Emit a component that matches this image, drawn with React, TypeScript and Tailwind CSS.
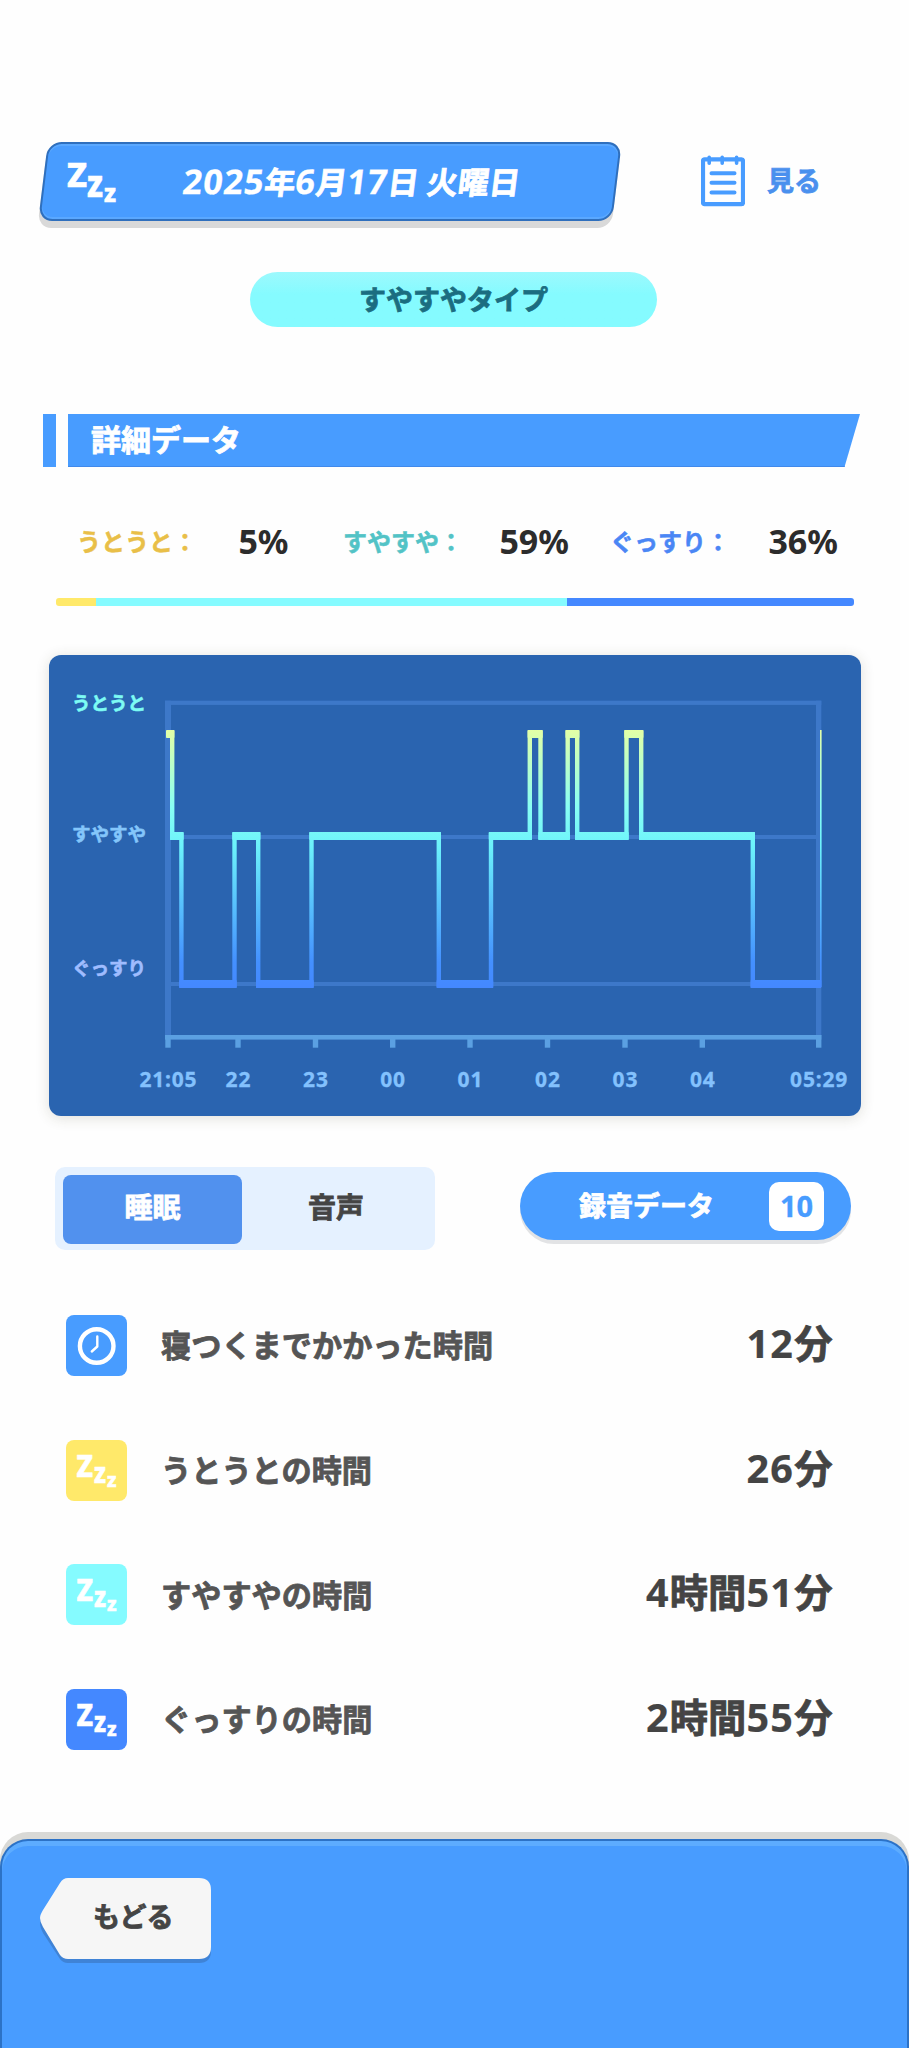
import { useState } from 'react'
import clsx from 'clsx'

interface ZLetter {
  char: string
  x: number
  y: number
  size: number
  width: number
}

const HEADER_Z: ZLetter[] = [
  { char: 'Z', x: 0, y: 25.5, size: 34, width: 20 },
  { char: 'z', x: 20, y: 36, size: 37, width: 16 },
  { char: 'z', x: 37, y: 40.5, size: 24, width: 12 },
]

const ROW_Z: ZLetter[] = [
  { char: 'Z', x: 10.5, y: 37, size: 30, width: 16.5 },
  { char: 'z', x: 28, y: 43, size: 27.5, width: 12 },
  { char: 'z', x: 41, y: 47, size: 20, width: 9.5 },
]

const RATIOS = [
  { label: 'うとうと', percent: 5, text: 'text-[#e9bf48]', bar: 'bg-[#ffe96a]', cell: 'w-[266px]', value: 'w-[61.5px]' },
  { label: 'すやすや', percent: 59, text: 'text-[#52c3c6]', bar: 'bg-[#85fbff]', cell: 'w-[267px]', value: 'w-[76px]' },
  { label: 'ぐっすり', percent: 36, text: 'text-[#4a86f5]', bar: 'bg-[#4488ff]', cell: 'w-[270px]', value: 'w-[78px]' },
]

const TICKS = [
  { x: 119, label: '21:05' },
  { x: 189, label: '22' },
  { x: 266.5, label: '23' },
  { x: 343.7, label: '00' },
  { x: 421, label: '01' },
  { x: 498.5, label: '02' },
  { x: 576, label: '03' },
  { x: 653.3, label: '04' },
  { x: 769.7, label: '05:29' },
]

// top edge of the line for each sleep level
const LEVEL_Y = { light: 75, mid: 177, deep: 325 }

const STEPS: { x: number; level: keyof typeof LEVEL_Y }[] = [
  { x: 118.5, level: 'light' },
  { x: 123.2, level: 'mid' },
  { x: 132.4, level: 'deep' },
  { x: 185.5, level: 'mid' },
  { x: 209.2, level: 'deep' },
  { x: 262.5, level: 'mid' },
  { x: 389.8, level: 'deep' },
  { x: 442, level: 'mid' },
  { x: 480.8, level: 'light' },
  { x: 491.5, level: 'mid' },
  { x: 518.7, level: 'light' },
  { x: 528.2, level: 'mid' },
  { x: 577.5, level: 'light' },
  { x: 592.2, level: 'mid' },
  { x: 703.8, level: 'deep' },
]

const ROWS = [
  { label: '寝つくまでかかった時間', value: '12分', bg: 'bg-[#489cff]', icon: 'clock' },
  { label: 'うとうとの時間', value: '26分', bg: 'bg-[#ffe96a]', icon: 'zzz' },
  { label: 'すやすやの時間', value: '4時間51分', bg: 'bg-[#85fbff]', icon: 'zzz' },
  { label: 'ぐっすりの時間', value: '2時間55分', bg: 'bg-[#4488ff]', icon: 'zzz' },
]

function Zzz({ letters, className }: { letters: ZLetter[]; className: string }) {
  return (
    <svg className={className} fill="#fff" stroke="#fff" strokeWidth="0.6" fontWeight="800">
      {letters.map((l, i) => (
        <text key={i} x={l.x} y={l.y} fontSize={l.size} textLength={l.width} lengthAdjust="spacingAndGlyphs">
          {l.char}
        </text>
      ))}
    </svg>
  )
}

function ClockIcon() {
  return (
    <svg className="h-[61px] w-[61px]" fill="none" stroke="#fff" strokeLinecap="round" strokeLinejoin="round">
      <circle cx="30.7" cy="31" r="16.8" strokeWidth="4.4" />
      <path d="M31.3 21.5V31.5L25.8 36.5" strokeWidth="2.4" />
    </svg>
  )
}

function NotepadIcon() {
  return (
    <svg className="h-[52px] w-[44px]" fill="none" stroke="#489cff" strokeLinecap="round">
      <rect x="2" y="4.4" width="40" height="44.8" rx="1.5" strokeWidth="4.2" />
      <path d="M8.2 2.2V8.2M21.2 2.2V8.2M35.6 2.2V8.2" strokeWidth="3.6" />
      <path d="M10.5 18.2H33.5M10.5 27.8H33.5M10.5 37.6H33.5" strokeWidth="4" />
    </svg>
  )
}

function SleepChart() {
  return (
    <svg className="h-[461px] w-[812px]" fontWeight="700">
      <defs>
        <linearGradient id="stage" gradientUnits="userSpaceOnUse" x1="0" y1="75" x2="0" y2="333">
          <stop offset="0" stopColor="#e3ffa6" />
          <stop offset="0.3" stopColor="#88fff4" />
          <stop offset="0.45" stopColor="#6cf2fb" />
          <stop offset="0.9" stopColor="#4490ff" />
          <stop offset="1" stopColor="#4488ff" />
        </linearGradient>
      </defs>

      {/* Grid */}
      <g fill="#3d78c9">
        <rect x="116" y="45.7" width="656.3" height="4.2" />
        <rect x="116" y="45.7" width="6" height="335" />
        <rect x="767" y="45.7" width="5.3" height="335" />
        <rect x="122" y="180" width="645" height="4" />
        <rect x="122" y="327" width="645" height="4" />
      </g>
      <rect x="116" y="380" width="656.3" height="4.6" fill="#5ba0e2" />
      {TICKS.map(t => (
        <rect key={t.label} x={t.x - 2.7} y="380" width="5.4" height="12.7" fill="#5ba0e2" />
      ))}

      {/* Stage line */}
      <g fill="url(#stage)">
        {STEPS.map((s, i) => {
          const next = STEPS[i + 1]
          const end = next ? next.x + 2.2 : 772.3
          const y = LEVEL_Y[s.level]
          const nextY = next ? LEVEL_Y[next.level] : y
          // the first step starts flush with the frame
          const start = i === 0 ? s.x - 1.5 : s.x - 2.2
          return (
            <g key={s.x}>
              <rect x={start} y={y} width={end - start} height="8" rx="0.8" />
              {next && (
                <rect x={next.x - 2.2} y={Math.min(y, nextY)} width="4.4" height={Math.abs(nextY - y) + 8} rx="0.8" />
              )}
            </g>
          )
        })}
        <rect x="771" y="75" width="1.6" height="257" />
      </g>

      {/* Labels */}
      <g fontSize="18.5" textAnchor="middle" strokeWidth="0.6">
        <text x="60" y="54.5" fill="#7dfbf4" stroke="#7dfbf4">うとうと</text>
        <text x="60" y="185.5" fill="#84c6fb" stroke="#84c6fb">すやすや</text>
        <text x="60" y="319.5" fill="#9fbcff" stroke="#9fbcff">ぐっすり</text>
      </g>
      <g fontSize="21" fill="#83c1fd" stroke="#83c1fd" strokeWidth="0.3" textAnchor="middle" letterSpacing="0.8">
        {TICKS.map(t => (
          <text key={t.label} x={t.x + 0.4} y="431.5">{t.label}</text>
        ))}
      </g>
    </svg>
  )
}

// digits are set a little larger and wider than the kanji round them
function Mixed({ text, digitClass }: { text: string; digitClass: string }) {
  return (
    <>
      {text.split(/(\d+)/).map((part, i) =>
        /\d/.test(part) ? <span key={i} className={digitClass}>{part}</span> : part,
      )}
    </>
  )
}

export default function App() {
  const [tab, setTab] = useState<'sleep' | 'voice'>('sleep')

  return (
    <div className="flex h-[2048px] w-[909px] flex-col overflow-hidden bg-[#fefefe] font-['Noto_Sans','Noto_Sans_CJK_JP',sans-serif] font-bold leading-none text-[#444] *:shrink-0 [-webkit-text-stroke:0.8px]">

      {/* Header */}
      <header className="mt-[142px] flex h-[79px] items-center">
        <div className="ml-[43px] flex h-[79px] w-[573.5px] -skew-x-[7deg] items-center rounded-[14px] border-2 border-[#2f6fbd] bg-[#489cff] shadow-[0_7px_0_#d9d9d9,inset_0_2px_0_#5aa8ff,inset_0_-2px_0_#5aa8ff]">
          <Zzz letters={HEADER_Z} className="ml-[22px] h-[42px] w-[50px] skew-x-[7deg] overflow-visible" />
          <h1 className="ml-[66px] whitespace-nowrap pb-[2px] text-[31px] text-white">
            <Mixed text="2025年6月17日 火曜日" digitClass="text-[34px] tracking-[1px] [-webkit-text-stroke:0.3px]" />
          </h1>
        </div>
        <button type="button" className="ml-[84.5px] flex items-center gap-[22px] pb-[2px] text-[27px] text-[#4a90ee]">
          <NotepadIcon />
          <span>見る</span>
        </button>
      </header>

      <div className="mt-[51px] ml-[250px] flex h-[55px] w-[407px] items-center justify-center rounded-full bg-linear-to-b from-[#9cf9fd] to-[#85fbff] to-40% pb-px text-[27px] text-[#1b6d80]">
        すやすやタイプ
      </div>

      {/* Details */}
      <div className="mt-[87px] ml-[43px] flex h-[53px] gap-3">
        <div className="w-[13px] bg-[#489cff]" />
        <h2 className="flex w-[792px] items-center border-b border-[#4189ea] bg-[#489cff] pl-[23px] text-[30px] text-white [clip-path:polygon(0_0,100%_0,calc(100%-15.5px)_100%,0_100%)]">
          詳細データ
        </h2>
      </div>

      <div className="mt-[51px] ml-[77px] flex h-[48px] items-center">
        {RATIOS.map(r => (
          <div key={r.label} className={clsx('flex items-center', r.cell)}>
            <span className={clsx('w-[150px] text-[24px] [-webkit-text-stroke:0.5px]', r.text)}>{r.label}：</span>
            <span className={clsx('pb-[3px] text-right text-[34px] text-[#2c2c2c] [-webkit-text-stroke:0]', r.value)}>{r.percent}%</span>
          </div>
        ))}
      </div>
      <div className="mt-[32px] ml-[56px] flex h-[8px] w-[798px] overflow-hidden rounded-[3px]">
        {RATIOS.map(r => (
          <div key={r.label} className={r.bar} style={{ width: `${r.percent}%` }} />
        ))}
      </div>

      <div className="mt-[49px] ml-[49px] h-[461px] w-[812px] rounded-xl bg-[#2a64b0] shadow-[0_2px_14px_rgba(60,60,30,0.16)]">
        <SleepChart />
      </div>

      {/* Tabs */}
      <div className="mt-[51px] ml-[55px] flex h-[83px] items-center">
        <div className="flex h-[83px] w-[380px] rounded-[10px] bg-[#e5f1ff] pt-[7.5px] pb-[6.5px] pl-2 text-[28px]">
          <button
            type="button"
            onClick={() => setTab('sleep')}
            className={clsx('w-[179px] shrink-0 rounded-lg pb-[4px]', tab === 'sleep' ? 'bg-[#5191ee] text-white' : 'text-[#444]')}
          >
            睡眠
          </button>
          <button
            type="button"
            onClick={() => setTab('voice')}
            className={clsx('mr-[5px] flex-1 rounded-lg pb-[4px]', tab === 'voice' ? 'bg-[#5191ee] text-white' : 'text-[#444]')}
          >
            音声
          </button>
        </div>
        <button type="button" className="mb-[5px] ml-[85px] flex h-[68px] w-[331px] items-center rounded-full bg-[#489cff] pl-[59px] text-[27px] text-white shadow-[0_4px_0_#e2e3e5]">
          <span className="w-[190px] pb-px text-left">録音データ</span>
          <span className="flex h-[49px] w-[55px] items-center justify-center rounded-[10px] bg-white pb-[2px] text-[29px] text-[#489cff] [-webkit-text-stroke:0.3px]">10</span>
        </button>
      </div>

      {/* Times */}
      <div className="mt-[65px] ml-[65.5px] flex w-[767px] flex-col gap-[63.6px]">
        {ROWS.map(row => (
          <div key={row.label} className="flex h-[61px] items-center">
            <div className={clsx('h-[61px] w-[61px] overflow-hidden rounded-lg', row.bg)}>
              {row.icon === 'clock' ? <ClockIcon /> : <Zzz letters={ROW_Z} className="h-[61px] w-[61px]" />}
            </div>
            <span className="ml-[34.5px] pt-[2px] text-[30.2px] text-[#555]">{row.label}</span>
            <span className="ml-auto pb-[3px] text-[38.3px]">
              <Mixed text={row.value} digitClass="text-[39.5px] tracking-[1.3px] [-webkit-text-stroke:0.2px]" />
            </span>
          </div>
        ))}
      </div>

      {/* Footer */}
      <footer className="mt-[89px] h-[210px] rounded-t-[28px] border-2 border-b-0 border-[#2c72c6] bg-[#489cff] pt-[37px] pl-[38px] shadow-[0_-7px_0_#d9d9d6,inset_0_5px_0_#5dacff]">
        <button type="button" className="relative flex h-[84px] w-[171px] items-center pb-[6px] pl-[53px] text-[27px]">
          <svg className="absolute inset-0 h-[86px] w-[171px]">
            <path d="M28 4H159Q171 4 171 16V73Q171 85 159 85H28Q23 85 20 81L3 55Q0 49 0 45Q0 41 3 35L20 8Q23 4 28 4Z" fill="#3f83d6" />
            <path d="M28 0H159Q171 0 171 12V69Q171 81 159 81H28Q23 81 20 77L3 49Q0 44 0 40Q0 37 3 32L20 5Q23 0 28 0Z" fill="#f6f6f6" />
          </svg>
          <span className="relative">もどる</span>
        </button>
      </footer>
    </div>
  )
}
